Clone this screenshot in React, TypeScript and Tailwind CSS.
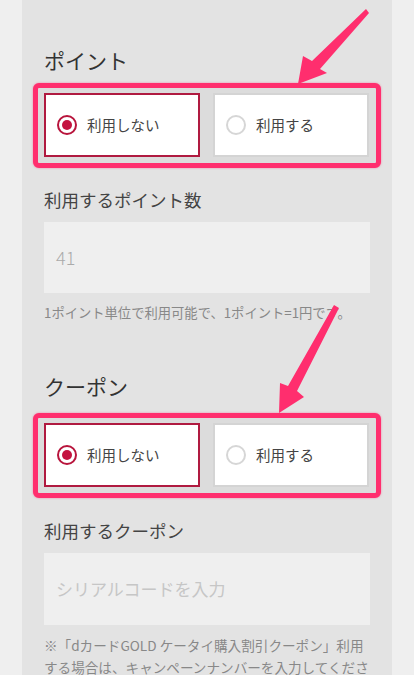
import type { ReactNode } from "react";

const font = { fontFamily: '"Noto Sans CJK JP", "Noto Sans", sans-serif' };

function Radio({ checked }: { checked: boolean }) {
  return checked ? (
    <span className="flex size-[20px] shrink-0 items-center justify-center rounded-full border-2 border-[#b8143c] bg-white">
      <span className="size-[10px] rounded-full bg-[#c4123f]" />
    </span>
  ) : (
    <span className="size-[20px] shrink-0 rounded-full border-2 border-[#d6d6d6] bg-white" />
  );
}

function Option({ label, checked }: { label: string; checked: boolean }) {
  return (
    <div
      className={
        checked
          ? "flex h-[64px] flex-1 items-center gap-[10px] border-2 border-[#b01a40] bg-white pl-[11px]"
          : "flex h-[64px] flex-1 items-center gap-[10px] border-2 border-[#d4d4d4] bg-white pl-[11px]"
      }
    >
      <Radio checked={checked} />
      <span className="text-[14.5px] leading-none text-[#444]">{label}</span>
    </div>
  );
}

function Highlighted({ className, children }: { className: string; children: ReactNode }) {
  return (
    <div
      className={`-ml-[11px] -mr-[11px] rounded-[6px] border-[5px] border-[#ff2e6e] bg-[#dcdcdc] pt-[5px] pb-[6px] pl-[6px] pr-[7px] shadow-[0_0_2px_rgba(255,46,110,0.6)] ${className}`}
    >
      <div className="flex gap-[13px]">{children}</div>
    </div>
  );
}

export default function App() {
  return (
    <div className="relative h-[675px] w-[414px] overflow-hidden bg-[#efefef]" style={font}>
      <div className="ml-[22px] flex h-full w-[370px] flex-col bg-[#e3e3e3] px-[22px] pt-[45px]">
        <h2 className="text-[21px] leading-[30px] font-normal text-[#333]">ポイント</h2>
        <Highlighted className="mt-[8px]">
          <Option label="利用しない" checked />
          <Option label="利用する" checked={false} />
        </Highlighted>

        <p className="mt-[20px] text-[17.5px] leading-[24px] text-[#444]">利用するポイント数</p>
        <div className="mt-[10px] flex h-[71px] shrink-0 items-center bg-[#efefef] px-[12px]">
          <span className="text-[18px] font-light text-[#aaaaaa]">41</span>
        </div>
        <p className="mt-[10px] text-[13.3px] leading-[20px] text-[#888]">
          1ポイント単位で利用可能で、1ポイント=1円です。
        </p>

        <h2 className="mt-[48px] text-[21px] leading-[30px] font-normal text-[#333]">クーポン</h2>
        <Highlighted className="mt-[12px]">
          <Option label="利用しない" checked />
          <Option label="利用する" checked={false} />
        </Highlighted>

        <p className="mt-[21px] text-[17.5px] leading-[24px] text-[#444]">利用するクーポン</p>
        <div className="mt-[10px] flex h-[72px] shrink-0 items-center bg-[#efefef] px-[12px]">
          <span className="text-[17px] text-[#c6c6c6]">シリアルコードを入力</span>
        </div>
        <p className="mt-[9px] text-[13.6px] leading-[22px] text-[#888]">
          ※「dカードGOLD ケータイ購入割引クーポン」利用する場合は、キャンペーンナンバーを入力してください。
        </p>
      </div>

      <svg className="pointer-events-none absolute inset-0" width="414" height="675" viewBox="0 0 414 675">
        <polygon points="298,84 303,56 312,61 366,9 369,13 320,69 327,73" fill="#ff2e6e" />
        <polygon points="279,413 280,383 288,386 334,305 339,308 297,391 304,397" fill="#ff2e6e" />
      </svg>
    </div>
  );
}
